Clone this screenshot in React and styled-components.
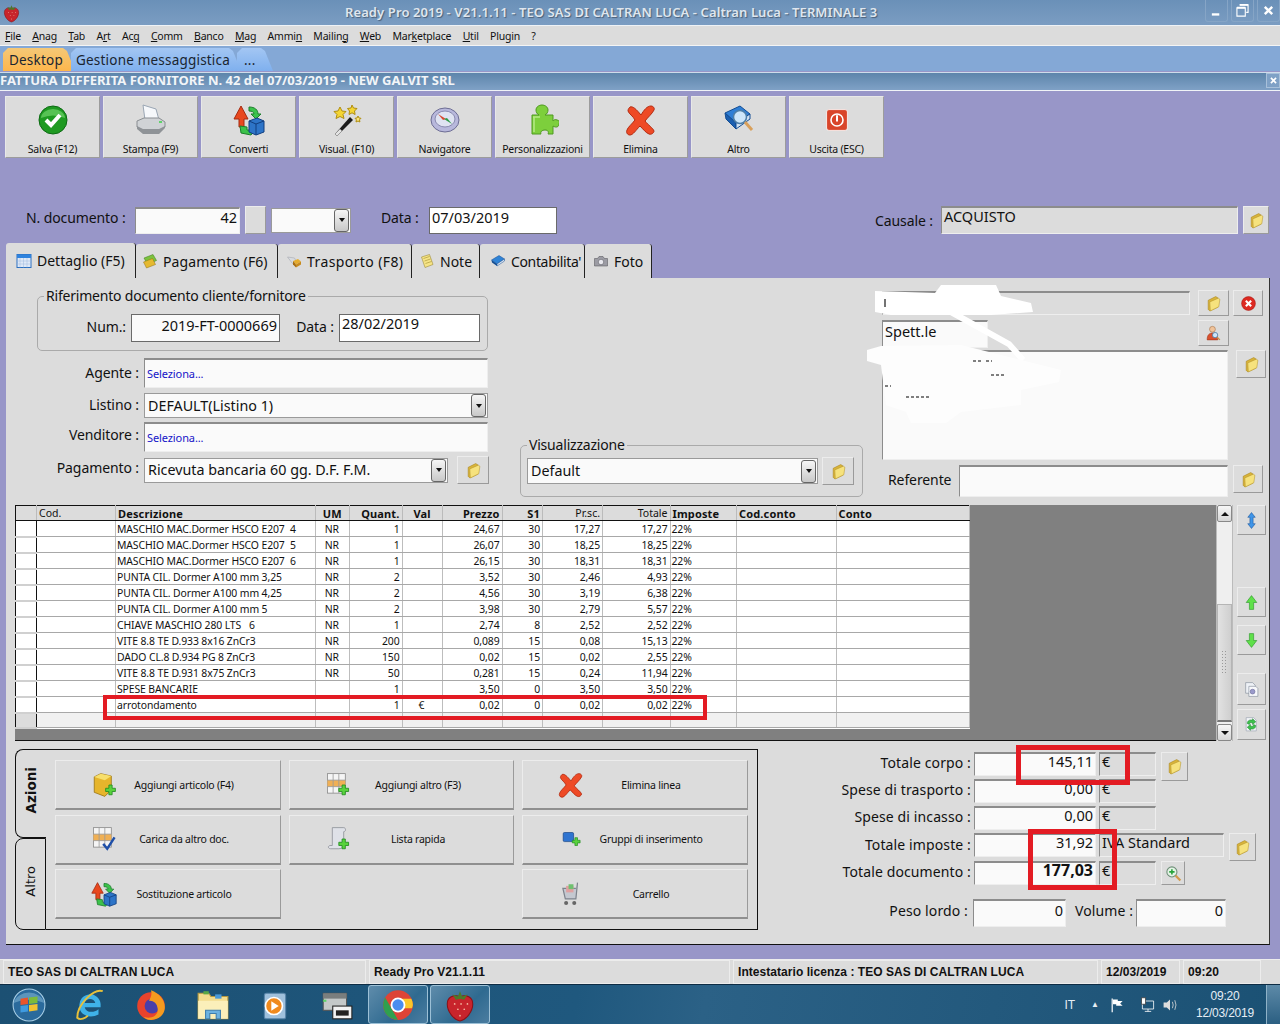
import React from "react";
import styled, { createGlobalStyle } from "styled-components";

const GlobalStyle = createGlobalStyle`
  html, body { margin: 0; padding: 0; background: #9896c8; }
  * { box-sizing: border-box; }
  body { font-family: "Noto Sans", "Open Sans", sans-serif; color: #111; }
`;

const Screen = styled.div`
  width: 1280px;
  height: 1024px;
  overflow: hidden;
  display: flex;
  flex-direction: column;
  background: #9896c8;
`;

/* ---------- window chrome ---------- */
const TitleBar = styled.div`
  height: 26px;
  display: flex;
  align-items: center;
  padding-left: 2px;
  background: linear-gradient(#6a90b8, #7b9dc2);
  border-bottom: 1px solid #eef2f6;
  > svg { width: 19px; height: 20px; flex: none; }
`;
const TitleText = styled.div`
  flex: 1;
  padding: 0 0 2px 324px;
  font-size: 13px;
  font-weight: 600;
  letter-spacing: 0.1px;
  color: #dfe6ee;
  text-shadow: 1px 1px 1px #4a5f78;
  white-space: nowrap;
`;
const WinBtn = styled.div`
  width: 23px;
  height: 22px;
  margin: 0 0 3px 3px;
  border: 1px solid #86a5c6;
  border-top: 0;
  border-radius: 0 0 3px 3px;
  display: flex;
  align-items: center;
  justify-content: center;
  svg { width: 13px; height: 13px; }
`;
const MenuBar = styled.div`
  height: 20px;
  display: flex;
  align-items: center;
  gap: 11.3px;
  padding-left: 5px;
  background: #dcdcdc;
  border-bottom: 1px solid #f4f4f4;
  font-size: 10.5px;
  letter-spacing: -0.2px;
  u { text-decoration-thickness: 1px; text-underline-offset: 1px; }
`;
const TabStrip = styled.div`
  height: 25px;
  display: flex;
  align-items: flex-end;
  padding-left: 3px;
  background: #84a8d6;
`;
const AppTab = styled.div`
  height: 23px;
  width: ${(p) => p.$w}px;
  margin-right: ${(p) => p.$mr || 0}px;
  padding-left: ${(p) => p.$pl || 5}px;
  display: flex;
  align-items: center;
  font-size: 13.5px;
  letter-spacing: 0.2px;
  color: #1a2530;
  background: ${(p) => (p.$active ? "linear-gradient(#f4c877, #fdb64c)" : "linear-gradient(#a3c6f3, #7fb0ee)")};
  clip-path: polygon(0 100%, 0 5px, 5px 0, calc(100% - 12px) 0, calc(100% - 8px) 3px, 100% 100%);
`;
const DocTitle = styled.div`
  height: 19px;
  margin-top: 1px;
  padding-bottom: 3px;
  display: flex;
  align-items: center;
  justify-content: space-between;
  background: linear-gradient(#5d85ab, #7fa1c6);
  border-top: 1px solid #cfdcea;
  border-bottom: 1px solid #f0f3f7;
  color: #f2f5f8;
  font-size: 13px;
  font-weight: 700;
  white-space: nowrap;
`;
const DocClose = styled.span`
  width: 14px;
  height: 15px;
  background: #7fa1c6;
  border: 1px solid #a8c0da;
  display: flex;
  align-items: center;
  justify-content: center;
  svg { width: 9px; height: 9px; }
`;

const Body = styled.div`
  flex: 1;
  padding-top: 5px;
  display: flex;
  flex-direction: column;
`;
const Toolbar = styled.div`
  height: 62px;
  display: flex;
  gap: 3px;
  padding-left: 5px;
`;
const ToolBtn = styled.div`
  width: 95px;
  height: 62px;
  background: #dcdcdc;
  border: 1px solid;
  border-color: #e8e8e8 #9c9c9c #9c9c9c #e8e8e8;
  display: flex;
  flex-direction: column;
  align-items: center;
  padding-top: 7px;
  font-size: 10.5px;
  letter-spacing: -0.25px;
  white-space: nowrap;
  span { margin-top: 6px; }
  svg { height: 32px; }
`;

/* ---------- form parts ---------- */
const Label = styled.span`
  font-size: 14px;
  white-space: nowrap;
  letter-spacing: ${(p) => (p.$wide ? 0.12 : -0.1)}px;
  flex: none;
  width: ${(p) => (p.$w ? `${p.$w}px` : "auto")};
  text-align: ${(p) => p.$align || "left"};
  margin-left: ${(p) => p.$ml || 0}px;
  margin-bottom: ${(p) => p.$mb || 0}px;
  padding-top: ${(p) => p.$pt || 0}px;
`;
const Field = styled.div`
  width: ${(p) => p.$w}px;
  height: ${(p) => p.$h || 26}px;
  margin-left: ${(p) => p.$ml || 0}px;
  margin-top: ${(p) => p.$mt || 0}px;
  flex: none;
  padding: 0 2px 6px 2px;
  display: flex;
  align-items: ${(p) => (p.$top ? "flex-start" : "center")};
  justify-content: ${(p) => (p.$right ? "flex-end" : "flex-start")};
  background: ${(p) => (p.$gray ? "#dcdcdc" : p.$bright ? "#fff" : "#fafafa")};
  border: 1px solid #a4a4a4;
  border-color: #8c8c8c #eee #eee #8c8c8c;
  border-width: 2px 1px 1px 1px;
  font-size: ${(p) => (p.$bold ? 16 : 14.5)}px;
  line-height: 17px;
  white-space: nowrap;
  font-weight: ${(p) => (p.$bold ? 700 : 400)};
`;
const DarkField = styled(Field)`
  border: 1px solid #6a6a6a;
`;
const Pick = styled.span`
  font-size: 11px;
  color: #1414c8;
  letter-spacing: -0.1px;
  margin-top: 6px;
`;
const SelectBox = styled.div`
  width: ${(p) => p.$w}px;
  height: ${(p) => p.$h || 25}px;
  margin-left: ${(p) => p.$ml || 0}px;
  flex: none;
  padding: 0 3px;
  display: flex;
  align-items: center;
  justify-content: space-between;
  background: #fafafa;
  border: 1px solid #9a9a9a;
  font-size: 14.3px;
  line-height: 18px;
  white-space: nowrap;
`;
const DropArrow = styled.div`
  width: 15px;
  height: 23px;
  margin-right: -2px;
  flex: none;
  border: 1px solid #666;
  border-radius: 3px;
  background: linear-gradient(#f6f6f6, #c8c8c8);
  display: flex;
  align-items: center;
  justify-content: center;
  &::after {
    content: "";
    border: 3.5px solid transparent;
    border-top: 4px solid #111;
    border-bottom: 0;
  }
`;
const IconBtn = styled.div`
  width: ${(p) => p.$w || 30}px;
  height: ${(p) => p.$h || 28}px;
  margin-left: ${(p) => p.$ml || 0}px;
  margin-top: ${(p) => p.$mt || 0}px;
  flex: none;
  display: flex;
  align-items: center;
  justify-content: center;
  background: #dcdcdc;
  border: 1px solid;
  border-color: #ececec #9a9a9a #9a9a9a #ececec;
  svg { width: 17px; height: 17px; }
`;
const DocRow = styled.div`
  height: 28px;
  margin-top: 48px;
  display: flex;
  align-items: center;
  padding-left: 26px;
`;

/* ---------- tabbed panel ---------- */
const PageTabs = styled.div`
  height: 35px;
  margin: 9px 0 0 6px;
  display: flex;
  align-items: stretch;
`;
const PageTab = styled.div`
  width: ${(p) => p.$w}px;
  margin-top: ${(p) => (p.$active ? 0 : 1)}px;
  background: #dcdcdc;
  border-right: 1px solid #222;
  border-radius: 3px 3px 0 0;
  display: flex;
  align-items: center;
  padding-left: ${(p) => p.$pl || 7}px;
  gap: 5px;
  font-size: 14px;
  letter-spacing: ${(p) => p.$ls || 0}px;
  white-space: nowrap;
  svg { width: 16px; height: 16px; flex: none; }
`;
const Panel = styled.div`
  width: 1264px;
  height: 667px;
  margin-left: 6px;
  background: #dcdcdc;
  border-bottom: 1px solid #111;
  border-right: 1px solid #333;
`;
const TopSection = styled.div`
  height: 227px;
  display: flex;
  padding-left: 31px;
`;
const LeftCol = styled.div`
  width: 451px;
  padding-top: 9px;
  display: flex;
  flex-direction: column;
`;
const Group = styled.fieldset`
  margin: 0;
  padding: 9px 0 8px 0;
  border: 1px solid #aaa;
  border-radius: 5px;
  min-width: 0;
  display: flex;
  align-items: center;
  legend {
    margin-left: 6px;
    padding: 0 2px;
    font-size: 14px;
    line-height: 18px;
    letter-spacing: -0.2px;
  }
`;
const GroupInner = styled.div`
  display: flex;
  align-items: center;
  margin-left: ${(p) => p.$ml || 0}px;
`;
const FormRow = styled.div`
  margin-top: ${(p) => p.$mt}px;
  display: flex;
  align-items: center;
  gap: 5px;
`;
const ViewGroup = styled(Group)`
  width: 343px;
  height: 61px;
  margin: auto 0 8px 32px;
  padding: 3px 0 0 0;
  align-items: flex-start;
`;
const RightCol = styled.div`
  position: relative;
  width: 385px;
  margin-left: 19px;
  padding-top: 12px;
  display: flex;
  flex-direction: column;
`;
const RightRow = styled.div`
  display: flex;
  align-items: flex-start;
  margin-top: ${(p) => p.$mt || 0}px;
`;
const Scribble = styled.svg`
  position: absolute;
  left: -21px;
  top: 2px;
  pointer-events: none;
`;

/* ---------- grid ---------- */
const GridRow = styled.div`
  display: flex;
  margin-left: 9px;
  height: 236px;
`;
const TableArea = styled.div`
  position: relative;
  width: 1201px;
  background: #808080;
  border-bottom: 1px solid #111;
`;
const Table = styled.table`
  width: 954px;
  border-collapse: collapse;
  table-layout: fixed;
  background: #fff;
  border: 1px solid #111;
  font-size: 10.4px;
  letter-spacing: -0.1px;
`;
const Th = styled.th`
  height: 15px;
  padding: 0 2px;
  background: #dcdcdc;
  border-right: 1px solid #bbb;
  border-bottom: 1px solid #111;
  font-size: ${(p) => (p.$plain ? 10.5 : 11)}px;
  font-weight: ${(p) => (p.$plain ? 400 : 700)};
  letter-spacing: ${(p) => (p.$plain ? 0 : 0.15)}px;
  text-align: ${(p) => p.$align || "left"};
  white-space: nowrap;
  line-height: 13px;
`;
const Td = styled.td`
  height: ${(p) => (p.$shade ? 15 : 16)}px;
  padding: 1px 2px 0 1px;
  border-right: 1px solid #bdbdbd;
  border-bottom: 1px solid #a8a8a8;
  text-align: ${(p) => p.$align || "left"};
  white-space: pre;
  overflow: hidden;
  line-height: 13px;
  background: ${(p) => (p.$shade ? "#f1f1f1" : "#fff")};
`;
const RowMark = styled(Td)`
  border-right: 1px solid #111;
  background: ${(p) => (p.$shade ? "#dcdcdc" : "#fff")};
  border-bottom: 2px solid #d0d0d0;
`;
const RedBox = styled.div`
  position: absolute;
  left: ${(p) => p.$x}px;
  top: ${(p) => p.$y}px;
  width: ${(p) => p.$w}px;
  height: ${(p) => p.$h}px;
  border: ${(p) => p.$b || 4}px solid #e31b23;
  pointer-events: none;
`;
const Scroll = styled.div`
  width: 17px;
  display: flex;
  flex-direction: column;
  background: #efefef;
  border: 1px solid #bbb;
  border-width: 0 1px;
`;
const ScrollArrow = styled.div`
  height: 17px;
  display: flex;
  align-items: center;
  justify-content: center;
  background: linear-gradient(#f7f7f7, #d6d6d6);
  border: 1px solid #888;
  border-radius: 2px;
  &::after {
    content: "";
    border: 4px solid transparent;
    ${(p) => (p.$down ? "border-top: 4px solid #111; border-bottom: 0;" : "border-bottom: 4px solid #111; border-top: 0;")}
  }
`;
const ScrollTrack = styled.div`
  flex: 1;
  display: flex;
  flex-direction: column;
  padding-top: 82px;
`;
const ScrollThumb = styled.div`
  height: 118px;
  background: linear-gradient(90deg, #e2e2e2, #cfcfcf);
  border: 1px solid #b5b5b5;
  border-bottom: 2px solid #777;
  display: flex;
  align-items: flex-end;
  justify-content: center;
  padding-bottom: 46px;
  &::after {
    content: "";
    width: 7px;
    height: 24px;
    background-image: radial-gradient(#999 35%, transparent 40%);
    background-size: 3px 3px;
  }
`;
const SideBtns = styled.div`
  width: 29px;
  margin-left: 4px;
  display: flex;
  flex-direction: column;
`;

/* ---------- actions + totals ---------- */
const BottomRow = styled.div`
  display: flex;
  margin: 8px 0 0 9px;
`;
const ActionWrap = styled.div`
  width: 743px;
  height: 181px;
  display: flex;
`;
const SideTabs = styled.div`
  width: 31px;
  flex: none;
  display: flex;
  flex-direction: column;
`;
const SideTab = styled.div`
  height: ${(p) => p.$h}px;
  display: flex;
  align-items: center;
  justify-content: center;
  background: #dcdcdc;
  border: 1px solid #111;
  border-right: ${(p) => (p.$active ? "0" : "1px solid #111")};
  border-radius: 8px 0 0 8px;
  span {
    writing-mode: vertical-rl;
    transform: rotate(180deg);
    font-family: "DejaVu Sans", sans-serif;
    font-size: ${(p) => (p.$active ? 13.5 : 13)}px;
    font-weight: ${(p) => (p.$active ? 700 : 400)};
    margin-top: -6px;
  }
`;
const ActionGrid = styled.div`
  flex: 1;
  border: 1px solid #111;
  border-left: 0;
  padding: 10px 0 0 9px;
  display: grid;
  grid-template-columns: 226px 225px 226px;
  grid-template-rows: 50px 50px 50px;
  column-gap: 8px;
  row-gap: 4.5px;
`;
const ActionBtn = styled.div`
  grid-column: ${(p) => p.$col};
  display: flex;
  align-items: center;
  background: #dcdcdc;
  border: 1px solid;
  border-color: #ececec #9a9a9a #8f8f8f #ececec;
  border-bottom-width: 2px;
  font-size: 10.5px;
  letter-spacing: -0.25px;
`;
const ActionIcon = styled.div`
  width: 96px;
  flex: none;
  display: flex;
  justify-content: center;
  svg { width: 26px; height: 28px; }
`;
const ActionLabel = styled.div`
  width: 64px;
  display: flex;
  justify-content: center;
  white-space: nowrap;
`;
const Totals = styled.div`
  position: relative;
  margin-left: 17px;
  padding-top: 3px;
  width: 490px;
  display: flex;
  flex-direction: column;
`;
const TotalRow = styled.div`
  display: flex;
  align-items: flex-start;
  margin-top: ${(p) => p.$mt || 0}px;
`;

/* ---------- status + taskbar ---------- */
const StatusBar = styled.div`
  height: 25px;
  margin-top: auto;
  display: flex;
  gap: 3px;
  padding-left: 3px;
  background: #dcdcdc;
  border-top: 1px solid #ececec;
`;
const StatusCell = styled.div`
  width: ${(p) => p.$w}px;
  flex: none;
  display: flex;
  align-items: center;
  padding-left: 4px;
  border: 1px solid #ececec;
  font-family: "Liberation Sans", sans-serif;
  font-size: 12px;
  font-weight: 700;
  letter-spacing: 0.05px;
  white-space: nowrap;
`;
const Taskbar = styled.div`
  height: 40px;
  flex: none;
  display: flex;
  align-items: center;
  background: linear-gradient(100deg, #1c5073, #1f587e 45%, #2b6186 55%, #1b5174);
  border-top: 1px solid #0e2c44;
  color: #e6eef5;
`;
const TaskSlot = styled.div`
  width: ${(p) => p.$w}px;
  margin-left: ${(p) => p.$ml || 0}px;
  flex: none;
  height: 39px;
  display: flex;
  align-items: center;
  justify-content: center;
  ${(p) =>
    p.$active &&
    `background: linear-gradient(135deg, #5f8cab, #2f6a90 60%, #4b7da0);
     border: 1px solid #9cc0d6; border-radius: 3px;`}
  svg { width: 34px; height: 34px; }
`;
const Tray = styled.div`
  margin-left: auto;
  display: flex;
  align-items: center;
  height: 100%;
  font-family: "Liberation Sans", sans-serif;
  font-size: 12px;
`;
const TrayText = styled.span`
  font-size: ${(p) => p.$size || 12}px;
  margin-right: ${(p) => p.$mr}px;
`;
const TrayIcon = styled.span`
  display: flex;
  margin-right: ${(p) => p.$mr}px;
  svg { width: 16px; height: 16px; }
`;
const Clock = styled.div`
  width: 78px;
  text-align: center;
  line-height: 17px;
  font-size: 12px;
  letter-spacing: -0.2px;
`;
const ShowDesktop = styled.div`
  width: 14px;
  height: 100%;
  margin-left: 2px;
  background: linear-gradient(#5d8aa8, #2b5f82);
  border-left: 1px solid #8fb2c8;
`;

/* ---------- icons ---------- */
const Svg = ({ children, vb = "0 0 32 32" }) => (
  <svg viewBox={vb} xmlns="http://www.w3.org/2000/svg">
    {children}
  </svg>
);
const MinGlyph = () => (
  <Svg vb="0 0 14 14"><rect x="2" y="10" width="8" height="2.500" fill="#fff" /></Svg>
);
const RestoreGlyph = () => (
  <Svg vb="0 0 14 14">
    <path d="M4 1h9v8h-2M1 4h9v9H1z" fill="none" stroke="#fff" strokeWidth="1.200" />
    <path d="M1 4h9M4 1h9" stroke="#fff" strokeWidth="2" />
  </Svg>
);
const CloseGlyph = () => (
  <Svg vb="0 0 14 14"><path d="M3 3l8 8M11 3l-8 8" stroke="#fff" strokeWidth="2.600" /></Svg>
);
const CheckIcon = () => (
  <Svg>
    <circle cx="16" cy="16" r="14" fill="#1f9a22" stroke="#0d6b14" />
    <path d="M4 14a12 9 0 0 1 24 0q-12-5-24 0z" fill="#6fd36a" opacity=".7" />
    <path d="M9 16l5 5 9-10" fill="none" stroke="#fff" strokeWidth="4" />
  </Svg>
);
const PrinterIcon = () => (
  <Svg>
    <path d="M8 1l13 4 3 11H10z" fill="#f6f8fb" stroke="#9aa6b4" />
    <path d="M2 17l7-3h15l6 4v5l-6 4H8l-6-4z" fill="#d0d3d6" stroke="#8a8e92" />
    <path d="M2 22l6 3h16l6-3v2l-6 6H8l-6-5z" fill="#8f9397" />
    <rect x="24" y="17" width="3" height="2" fill="#5fd36a" />
  </Svg>
);
const ConvertIcon = () => (
  <Svg>
    <path d="M8 2l7 13h-4v8H6v-8H1z" fill="#e8481e" stroke="#a52a10" />
    <path d="M16 3c6 0 9 3 9 7h3l-5 5-5-5h3c0-2-2-3-5-3z" fill="#3cc24b" stroke="#1c7f2b" />
    <path d="M7 22l7 1v3h8l-4 5-10-2z" fill="#3cc24b" stroke="#1c7f2b" />
    <path d="M16 17l8-3 7 3v11l-8 3-7-3z" fill="#2d74c8" stroke="#123f80" />
    <path d="M16 17l7 3 8-3M23 20v11" fill="none" stroke="#123f80" />
  </Svg>
);
const WandIcon = () => (
  <Svg>
    <path d="M4 30l2 2L22 16l-3-3z" fill="#1c1c1c" />
    <path d="M4 30l2 2 5-5-2-2z" fill="#e3e3e3" stroke="#888" strokeWidth=".5" />
    <path d="M9 3l2 4 4 .5-3 3 1 4-4-2-4 2 1-4-3-3 4-.5z" fill="#f4d534" stroke="#b08e10" />
    <path d="M21 1l1.500 3 3.500.5-2.500 2.500.6 3.500-3.100-1.700-3 1.700.5-3.500L16.500 4.500 20 4z" fill="#f4d534" stroke="#b08e10" />
    <path d="M27 12l1 2 2 .3-1.500 1.500.4 2.200-1.900-1-2 1 .4-2.200L24 14.300l2-.3z" fill="#f7e27a" stroke="#b08e10" />
  </Svg>
);
const CompassIcon = () => (
  <Svg>
    <ellipse cx="16" cy="16" rx="14" ry="12" fill="#b8b8dc" stroke="#6d6d94" />
    <ellipse cx="16" cy="15" rx="10" ry="8" fill="#dfe3f2" stroke="#8a8ab0" />
    <path d="M9 10l8 5-3 1z" fill="#d84a30" />
    <path d="M23 20l-8-5 3-1z" fill="#2f9a4a" />
  </Svg>
);
const PuzzleIcon = () => (
  <Svg>
    <path d="M5 11h7c-2-1-3-3-3-5 0-3 3-5 6-5s6 2 6 5c0 2-1 4-3 5h8v6c1-1 2-2 4-1 2 0 3 2 2 4 0 3-3 4-6 2v8H21c1-2 0-4-3-4s-5 2-4 4H5z" fill="#7dcf3c" stroke="#4f9a20" />
    <path d="M6 13h7M7 13v15" stroke="#b6ea86" strokeWidth="1.500" fill="none" />
  </Svg>
);
const CrossIcon = () => (
  <Svg>
    <path d="M5 3c3-1 6 2 11 8 3-5 6-9 10-9 2 0 4 2 3 4-2 4-6 7-9 11 3 4 8 7 9 10 0 2-3 4-5 3-3-1-6-5-9-8-4 4-7 9-10 9-3 0-4-3-3-5 1-3 5-6 8-10C8 12 4 10 3 7c0-2 1-3 2-4z" fill="#ee4a26" stroke="#b22a10" />
  </Svg>
);
const BookIcon = () => (
  <Svg>
    <path d="M2 9L17 2l10 8-14 9z" fill="#2f7fd6" stroke="#134d93" />
    <path d="M2 9l11 10v6L3 15z" fill="#1b5fb0" stroke="#134d93" />
    <path d="M13 19l14-9v5L13 25z" fill="#cfe0f2" stroke="#134d93" />
    <circle cx="17" cy="13" r="6.500" fill="#cde6fa" stroke="#4e7fa8" strokeWidth="1.500" />
    <path d="M22 18l7 8" stroke="#d9a05b" strokeWidth="3" />
  </Svg>
);
const PowerIcon = () => (
  <Svg vb="-4 -4 40 40">
    <rect x="3" y="3" width="26" height="26" rx="3" fill="#d9452a" stroke="#fff" />
    <circle cx="16" cy="16" r="7.500" fill="none" stroke="#fff" strokeWidth="2" />
    <path d="M16 10v8" stroke="#fff" strokeWidth="2.500" />
  </Svg>
);
const FolderIcon = () => (
  <Svg>
    <path d="M6 10l14-7 4 2v18L9 30l-3-3z" fill="#d9b43a" stroke="#a58320" />
    <path d="M9 13l16-7 3 2-2 14-16 8z" fill="#f6e27d" stroke="#b4932b" />
  </Svg>
);
const RedCloseIcon = () => (
  <Svg>
    <circle cx="16" cy="16" r="13" fill="#dd2a22" stroke="#a31510" />
    <path d="M11 11l10 10M21 11L11 21" stroke="#fff" strokeWidth="4" />
  </Svg>
);
const PersonIcon = () => (
  <Svg>
    <circle cx="14" cy="8" r="5.500" fill="#f0c39a" stroke="#9a6a40" />
    <path d="M4 28c0-9 4-13 10-13s10 4 10 13z" fill="#d9502e" stroke="#9a2f14" />
    <circle cx="19" cy="19" r="5" fill="#cde6fa" stroke="#4a7aa2" strokeWidth="1.500" />
    <path d="M23 23l5 5" stroke="#c8904a" strokeWidth="2.500" />
  </Svg>
);
const UpDownIcon = () => (
  <Svg>
    <path d="M16 1l7 9h-4v12h4l-7 9-7-9h4V10H9z" fill="#3f95e8" stroke="#174f95" />
  </Svg>
);
const ArrowIcon = ({ down }) => (
  <Svg>
    <path
      d={down ? "M12 3h8v13h6L16 29 6 16h6z" : "M12 29h8V16h6L16 3 6 16h6z"}
      fill="#5fe04a"
      stroke="#1f8a1e"
    />
  </Svg>
);
const CopyGearIcon = () => (
  <Svg>
    <path d="M5 3h13l5 5v15H5z" fill="#eef1f6" stroke="#6f7888" />
    <path d="M11 10h13l4 4v15H11z" fill="#f7f8fb" stroke="#6f7888" />
    <circle cx="18" cy="20" r="4.500" fill="#9a9acb" stroke="#5a5a8a" />
  </Svg>
);
const RefreshIcon = () => (
  <Svg>
    <path d="M6 3h14l5 5v20H6z" fill="#f2f4f8" stroke="#8a93a3" />
    <path d="M8 14c0-5 5-8 10-6V5l6 6-6 5v-3c-4-1-6 0-6 3z" fill="#3cc24b" stroke="#1c7f2b" />
    <path d="M24 18c0 5-5 8-10 6v3l-6-6 6-5v3c4 1 6 0 6-3z" fill="#3cc24b" stroke="#1c7f2b" />
  </Svg>
);
const ZoomPlusIcon = () => (
  <Svg>
    <circle cx="13" cy="13" r="9.500" fill="#e4f3e6" stroke="#6f8e78" strokeWidth="2" />
    <path d="M13 8v10M8 13h10" stroke="#26a33a" strokeWidth="3" />
    <path d="M20 20l9 9" stroke="#d49a4c" strokeWidth="4" />
  </Svg>
);
const CalIcon = () => (
  <Svg>
    <rect x="2" y="3" width="28" height="26" fill="#dfe9f7" stroke="#2b6fc0" strokeWidth="2" />
    <rect x="2" y="3" width="28" height="7" fill="#2f83de" />
    <path d="M8 10v19M15 10v19M22 10v19M2 16h28M2 22h28" stroke="#9fb9dc" />
  </Svg>
);
const MoneyIcon = () => (
  <Svg>
    <path d="M4 10l18-7 7 12-18 8z" fill="#7cc23f" stroke="#3c7a17" />
    <path d="M3 18l18-7 6 12-18 7z" fill="#e5b930" stroke="#8e6f10" />
  </Svg>
);
const TruckIcon = () => (
  <Svg>
    <path d="M3 8l14 2 4 8-8 3z" fill="#d8dbe0" stroke="#9a9ea6" />
    <path d="M14 16l10-4 6 5-10 6z" fill="#e6ad2e" />
    <path d="M14 16l6 7v6l-6-6z" fill="#a86e14" />
    <path d="M20 23l10-6v6l-10 6z" fill="#c78a1e" />
  </Svg>
);
const NoteIcon = () => (
  <Svg>
    <path d="M5 8l16-5 7 20-16 6z" fill="#f6e486" stroke="#8e7a22" />
    <path d="M9 11l12-4M11 16l12-4M13 21l12-4" stroke="#8e7a22" />
  </Svg>
);
const LedgerIcon = () => (
  <Svg>
    <path d="M3 14L18 5l11 7-15 10z" fill="#2f83d6" stroke="#134d93" />
    <path d="M3 14l11 8v4L4 19z" fill="#134d93" />
    <path d="M14 22l15-10v4L14 26z" fill="#dfe8f4" stroke="#134d93" />
  </Svg>
);
const CameraIcon = () => (
  <Svg>
    <path d="M3 11h6l3-4h8l3 4h6v15H3z" fill="#9c9ca4" stroke="#4c4c52" />
    <circle cx="16" cy="18" r="5.500" fill="#e8e8ee" stroke="#4c4c52" />
  </Svg>
);
const BoxPlusIcon = () => (
  <Svg>
    <path d="M4 6l8-4 13 3v17l-8 8-13-5z" fill="#e6b52c" stroke="#9a7512" />
    <path d="M4 6l13 4 8-5-13-3z" fill="#f7df6c" />
    <path d="M18 20h4v-4h4v4h4v4h-4v4h-4v-4h-4z" fill="#59d23d" stroke="#1f8a1e" />
  </Svg>
);
const GridPlusIcon = ({ check }) => (
  <Svg>
    <rect x="3" y="2" width="22" height="24" fill="#f5f5f5" stroke="#8a8a8a" />
    <rect x="3" y="10" width="22" height="8" fill="#f0b055" />
    <path d="M10 2v24M17 2v24M3 10h22M3 18h22" stroke="#9a9a9a" />
    {check ? (
      <path d="M15 22l5 6 9-14" fill="none" stroke="#1f4fa8" strokeWidth="3" />
    ) : (
      <path d="M17 20h4v-4h4v4h4v4h-4v4h-4v-4h-4z" fill="#59d23d" stroke="#1f8a1e" />
    )}
  </Svg>
);
const CheckGridIcon = () => <GridPlusIcon check />;
const ScrollPlusIcon = () => (
  <Svg>
    <path d="M9 2h14c3 0 3 5 0 5v15c0 4-2 6-6 6H7c-3 0-4-3-1-4h3z" fill="#dfe1e8" stroke="#8c9098" />
    <path d="M17 20h4v-4h4v4h4v4h-4v4h-4v-4h-4z" fill="#59d23d" stroke="#1f8a1e" />
  </Svg>
);
const GroupPlusIcon = () => (
  <Svg vb="-4 -4 40 40">
    <rect x="4" y="6" width="16" height="14" rx="2" fill="#2f74d0" stroke="#123f80" />
    <path d="M18 18h4v-4h4v4h4v4h-4v4h-4v-4h-4z" fill="#59d23d" stroke="#1f8a1e" />
  </Svg>
);
const CartIcon = () => (
  <Svg>
    <path d="M24 2l-2 20H9L6 9h16" fill="#c4c8d0" stroke="#7d838c" strokeWidth="1.500" />
    <rect x="10" y="6" width="9" height="8" fill="#e0a0a0" />
    <rect x="13" y="4" width="6" height="6" fill="#6fc06f" />
    <circle cx="10" cy="27" r="2.500" fill="#666" />
    <circle cx="20" cy="27" r="2.500" fill="#666" />
  </Svg>
);
const Strawberry = () => (
  <Svg>
    <path d="M16 8c7-2 12 1 12 7 0 7-6 15-12 16C10 30 4 22 4 15c0-6 5-9 12-7z" fill="#c8242c" stroke="#8a1218" />
    <path d="M9 6l5 2 2-5 2 5 5-2-3 5-4-1-4 1z" fill="#4c7a2a" />
    <g fill="#f3b8a0">
      <circle cx="11" cy="15" r=".8" /><circle cx="17" cy="15" r=".8" /><circle cx="23" cy="15" r=".8" />
      <circle cx="14" cy="20" r=".8" /><circle cx="20" cy="20" r=".8" /><circle cx="16" cy="26" r=".8" />
    </g>
  </Svg>
);
const WinOrb = () => (
  <Svg>
    <circle cx="16" cy="16" r="15" fill="#2a6a9c" stroke="#a9cfe6" />
    <path d="M1.500 14a15 13 0 0 1 29 0q-14.500-6-29 0z" fill="#7fb2d2" opacity=".6" />
    <path d="M8 10l7-1v6l-7 1z" fill="#e8552c" />
    <path d="M16 9l8-1v6l-8 1z" fill="#7dbb3a" />
    <path d="M8 17l7-1v6l-7 1z" fill="#3f9be0" />
    <path d="M16 16l8-1v6l-8 1z" fill="#f2c230" />
  </Svg>
);
const IeIcon = () => (
  <Svg>
    <path d="M6 17a10 10 0 0 1 20-2v3H11c1 5 8 6 13 2v5c-8 4-18 1-18-8zM11 14h10c-1-5-9-5-10 0z" fill="#3fb2e8" />
    <path d="M28 3c-8-3-24 12-24 25 3 3 8 0 10-2" fill="none" stroke="#e8c13a" strokeWidth="1.800" />
  </Svg>
);
const FoxIcon = () => (
  <Svg>
    <circle cx="16" cy="17" r="13" fill="#e8432c" />
    <circle cx="17" cy="17" r="7" fill="#4a3ea8" />
    <path d="M16 2c8 3 13 9 13 16 0 7-6 12-13 12-3 0-5-1-7-3 8 3 15-2 13-9-1-5-5-6-8-6 2-3 3-6 2-10z" fill="#f59a1f" />
  </Svg>
);
const ExplorerIcon = () => (
  <Svg>
    <path d="M2 5h10l2 3h16v21H2z" fill="#f3dd8e" stroke="#b89a40" />
    <path d="M2 12h28v17H2z" fill="#fbefba" />
    <rect x="7" y="3" width="5" height="3" fill="#5aa845" />
    <rect x="18" y="6" width="6" height="4" fill="#4a9ad8" />
    <path d="M9 29v-8h14v8h-4v-5h-6v5z" fill="#6db2e0" stroke="#3f7fae" />
  </Svg>
);
const MediaIcon = () => (
  <Svg>
    <rect x="6" y="5" width="20" height="24" rx="2" fill="#9fc0dc" stroke="#5a86aa" />
    <circle cx="15" cy="17" r="8" fill="#f08a1e" stroke="#fff" strokeWidth="1.500" />
    <path d="M12.500 12.500l7 4.500-7 4.500z" fill="#fff" />
  </Svg>
);
const PrintTaskIcon = () => (
  <Svg>
    <rect x="3" y="5" width="22" height="16" fill="#c4c8c8" stroke="#555" />
    <rect x="3" y="5" width="22" height="5" fill="#7a7e7e" />
    <rect x="3" y="11" width="3" height="2" fill="#5fd36a" />
    <rect x="12" y="17" width="18" height="12" fill="#f2f2f2" stroke="#222" />
    <rect x="15" y="21" width="12" height="5" fill="#222" />
  </Svg>
);
const ChromeIcon = () => (
  <Svg>
    <circle cx="16" cy="16" r="14" fill="#dd4436" />
    <path d="M16 30A14 14 0 0 1 3.900 9L10 19.500l6 10.500z" fill="#2fa04f" />
    <path d="M16 30l6-11h7.200A14 14 0 0 0 30 16c0-2-.5-4.200-1.500-6H16l6 9z" fill="#fbc72b" />
    <circle cx="16" cy="16" r="7" fill="#fff" />
    <circle cx="16" cy="16" r="5.300" fill="#4a8df0" />
  </Svg>
);
const FlagIcon = () => (
  <Svg vb="0 0 20 20">
    <path d="M4 2v17" stroke="#fff" strokeWidth="1.500" />
    <path d="M5 3h6v2h6l-3 3 3 3H9V9H5z" fill="#fff" />
  </Svg>
);
const NetIcon = () => (
  <Svg vb="0 0 20 20">
    <path d="M3 5h14v10H3z" fill="none" stroke="#fff" />
    <rect x="2" y="1" width="5" height="8" fill="#fff" stroke="#444" />
    <path d="M10 15v3M6 18h8" stroke="#fff" />
  </Svg>
);
const SpeakerIcon = () => (
  <Svg vb="0 0 20 20">
    <path d="M2 7h4l4-4v14l-4-4H2z" fill="#ddd" />
    <path d="M13 6q2 4 0 8M16 4q3 6 0 12" fill="none" stroke="#ddd" />
  </Svg>
);

/* ---------- data ---------- */
const MENU = [
  [null, "F", "ile"], [null, "A", "nag"], [null, "T", "ab"], ["A", "r", "t"], ["Ac", "q", ""], [null, "C", "omm"],
  [null, "B", "anco"], [null, "M", "ag"], ["Ammi", "n", ""], ["Mailin", "g", ""], [null, "W", "eb"],
  ["Mar", "k", "etplace"], [null, "U", "til"], ["Plugin", "", ""], ["?", "", ""],
];
const TOOLS = [
  ["Salva (F12)", CheckIcon], ["Stampa (F9)", PrinterIcon], ["Converti", ConvertIcon],
  ["Visual. (F10)", WandIcon], ["Navigatore", CompassIcon], ["Personalizzazioni", PuzzleIcon],
  ["Elimina", CrossIcon], ["Altro", BookIcon], ["Uscita (ESC)", PowerIcon],
];
const PAGE_TABS = [
  { label: "Dettaglio (F5)", Icon: CalIcon, w: 130, pl: 10, active: true },
  { label: "Pagamento (F6)", Icon: MoneyIcon, w: 142, pl: 6, ls: 0.1 },
  { label: "Trasporto (F8)", Icon: TruckIcon, w: 134, pl: 8, ls: 0.4 },
  { label: "Note", Icon: NoteIcon, w: 68, pl: 7 },
  { label: "Contabilita'", Icon: LedgerIcon, w: 105, pl: 10, ls: -0.35 },
  { label: "Foto", Icon: CameraIcon, w: 67, pl: 8 },
];
const COLS = [21, 79, 200, 33.5, 53, 40, 60, 40.5, 60, 67.5, 66.5, 99.5, 133.5];
const ROWS = [
  ["MASCHIO MAC.Dormer HSCO E207  4", "NR", "1", "", "24,67", "30", "17,27", "17,27"],
  ["MASCHIO MAC.Dormer HSCO E207  5", "NR", "1", "", "26,07", "30", "18,25", "18,25"],
  ["MASCHIO MAC.Dormer HSCO E207  6", "NR", "1", "", "26,15", "30", "18,31", "18,31"],
  ["PUNTA CIL. Dormer A100 mm 3,25", "NR", "2", "", "3,52", "30", "2,46", "4,93"],
  ["PUNTA CIL. Dormer A100 mm 4,25", "NR", "2", "", "4,56", "30", "3,19", "6,38"],
  ["PUNTA CIL. Dormer A100 mm 5", "NR", "2", "", "3,98", "30", "2,79", "5,57"],
  ["CHIAVE MASCHIO 280 LTS   6", "NR", "1", "", "2,74", "8", "2,52", "2,52"],
  ["VITE 8.8 TE D.933 8x16 ZnCr3", "NR", "200", "", "0,089", "15", "0,08", "15,13"],
  ["DADO CL.8 D.934 PG 8 ZnCr3", "NR", "150", "", "0,02", "15", "0,02", "2,55"],
  ["VITE 8.8 TE D.931 8x75 ZnCr3", "NR", "50", "", "0,281", "15", "0,24", "11,94"],
  ["SPESE BANCARIE", "", "1", "", "3,50", "0", "3,50", "3,50"],
  ["arrotondamento", "", "1", "€", "0,02", "0", "0,02", "0,02"],
];
const ACTIONS = [
  ["Aggiungi articolo (F4)", BoxPlusIcon, 1], ["Aggiungi altro (F3)", GridPlusIcon, 2], ["Elimina linea", CrossIcon, 3],
  ["Carica da altro doc.", CheckGridIcon, 1], ["Lista rapida", ScrollPlusIcon, 2], ["Gruppi di inserimento", GroupPlusIcon, 3],
  ["Sostituzione articolo", ConvertIcon, 1], ["Carrello", CartIcon, 3],
];

function GridTable() {
  return (
    <Table>
      <colgroup>
        {COLS.map((w, i) => (
          <col key={i} style={{ width: w }} />
        ))}
      </colgroup>
      <thead>
        <tr>
          <Th />
          <Th $plain>Cod.</Th>
          <Th>Descrizione</Th>
          <Th $align="center">UM</Th>
          <Th $align="right">Quant.</Th>
          <Th $align="center">Val</Th>
          <Th $align="right">Prezzo</Th>
          <Th $align="right">S1</Th>
          <Th $plain $align="right">Pr.sc.</Th>
          <Th $plain $align="right">Totale</Th>
          <Th>Imposte</Th>
          <Th>Cod.conto</Th>
          <Th>Conto</Th>
        </tr>
      </thead>
      <tbody>
        {ROWS.map((r) => (
          <tr key={r[0]}>
            <RowMark />
            <Td />
            <Td>{r[0]}</Td>
            <Td $align="center">{r[1]}</Td>
            <Td $align="right">{r[2]}</Td>
            <Td $align="center">{r[3]}</Td>
            <Td $align="right">{r[4]}</Td>
            <Td $align="right">{r[5]}</Td>
            <Td $align="right">{r[6]}</Td>
            <Td $align="right">{r[7]}</Td>
            <Td>22%</Td>
            <Td />
            <Td />
          </tr>
        ))}
        <tr>
          <RowMark $shade />
          {COLS.slice(1).map((w, i) => (
            <Td key={i} $shade />
          ))}
        </tr>
      </tbody>
    </Table>
  );
}

export default function App() {
  return (
    <Screen>
      <GlobalStyle />
      <TitleBar>
        <Strawberry />
        <TitleText>Ready Pro 2019 - V21.1.11 - TEO SAS DI CALTRAN LUCA - Caltran Luca - TERMINALE 3</TitleText>
        <WinBtn><MinGlyph /></WinBtn>
        <WinBtn><RestoreGlyph /></WinBtn>
        <WinBtn><CloseGlyph /></WinBtn>
      </TitleBar>
      <MenuBar>
        {MENU.map(([before, under, after]) => (
          <span key={`${before}${under}${after}`}>
            {before}
            {under && <u>{under}</u>}
            {after}
          </span>
        ))}
      </MenuBar>
      <TabStrip>
        <AppTab $active $w={72} $mr={-4} $pl={6}>Desktop</AppTab>
        <AppTab $w={170} $mr={-4}>Gestione messaggistica</AppTab>
        <AppTab $w={36} $pl={7}>...</AppTab>
      </TabStrip>
      <DocTitle>
        FATTURA DIFFERITA FORNITORE N. 42 del 07/03/2019 - NEW GALVIT SRL
        <DocClose><CloseGlyph /></DocClose>
      </DocTitle>

      <Body>
        <Toolbar>
          {TOOLS.map(([label, Icon]) => (
            <ToolBtn key={label}>
              <Icon />
              <span>{label}</span>
            </ToolBtn>
          ))}
        </Toolbar>

        <DocRow>
          <Label $w={109} $mb={5}>N. documento :</Label>
          <Field $w={105} $h={27} $right>42</Field>
          <IconBtn $w={21} $h={28} $ml={5} />
          <SelectBox $w={80} $ml={5}><span /><DropArrow /></SelectBox>
          <Label $ml={30} $w={48} $mb={5}>Data :</Label>
          <DarkField $bright $w={128} $h={27}>07/03/2019</DarkField>
          <Label $ml={318} $w={66}>Causale :</Label>
          <Field $gray $top $w={297} $h={28}>ACQUISTO</Field>
          <IconBtn $w={26} $h={28} $ml={5}><FolderIcon /></IconBtn>
        </DocRow>

        <PageTabs>
          {PAGE_TABS.map(({ label, Icon, w, pl, ls, active }) => (
            <PageTab key={label} $w={w} $pl={pl} $ls={ls} $active={active}>
              <Icon />
              {label}
            </PageTab>
          ))}
        </PageTabs>

        <Panel>
          <TopSection>
            <LeftCol>
              <Group>
                <legend>Riferimento documento cliente/fornitore</legend>
                <GroupInner>
                  <Label $w={88} $align="right" $mb={4}>Num.:</Label>
                  <DarkField $w={149} $h={28} $ml={5} $right>2019-FT-0000669</DarkField>
                  <Label $w={54} $align="right" $mb={4}>Data :</Label>
                  <DarkField $bright $w={141} $h={28} $ml={5} $top>28/02/2019</DarkField>
                </GroupInner>
              </Group>
              <FormRow $mt={7}>
                <Label $w={102} $align="right" $mb={2}>Agente :</Label>
                <Field $w={344} $h={30}><Pick>Seleziona...</Pick></Field>
              </FormRow>
              <FormRow $mt={5}>
                <Label $w={102} $align="right" $mb={2}>Listino :</Label>
                <SelectBox $w={344}>DEFAULT(Listino 1)<DropArrow /></SelectBox>
              </FormRow>
              <FormRow $mt={4}>
                <Label $w={102} $align="right" $mb={6}>Venditore :</Label>
                <Field $w={344} $h={30}><Pick>Seleziona...</Pick></Field>
              </FormRow>
              <FormRow $mt={4}>
                <Label $w={102} $align="right" $mb={5}>Pagamento :</Label>
                <SelectBox $w={304}>Ricevuta bancaria 60 gg. D.F. F.M.<DropArrow /></SelectBox>
                <IconBtn $w={32} $ml={4}><FolderIcon /></IconBtn>
              </FormRow>
            </LeftCol>

            <ViewGroup>
              <legend>Visualizzazione</legend>
              <GroupInner $ml={6}>
                <SelectBox $w={291} $h={26}>Default<DropArrow /></SelectBox>
                <IconBtn $w={32} $ml={4}><FolderIcon /></IconBtn>
              </GroupInner>
            </ViewGroup>

            <RightCol>
              <RightRow>
                <Field $gray $w={308} $h={24} $mt={1} />
                <IconBtn $w={31} $h={26} $ml={8}><FolderIcon /></IconBtn>
                <IconBtn $w={30} $h={26} $ml={4}><RedCloseIcon /></IconBtn>
              </RightRow>
              <RightRow $mt={4}>
                <Field $w={106} $h={28}>Spett.le</Field>
                <IconBtn $w={31} $h={26} $ml={210}><PersonIcon /></IconBtn>
              </RightRow>
              <RightRow $mt={2}>
                <Field $w={346} $h={110} />
                <IconBtn $w={30} $ml={8}><FolderIcon /></IconBtn>
              </RightRow>
              <RightRow $mt={5}>
                <Label $w={77} $pt={5} $ml={6}>Referente</Label>
                <Field $w={269} $h={32} $ml={-6} />
                <IconBtn $w={30} $ml={5}><FolderIcon /></IconBtn>
              </RightRow>
              <Scribble width="220" height="170" viewBox="860 280 220 170">
                <path d="M874 291l60 2 6-8 55 0 5 11 30 7 2 9-42 3H890l-16-3z" fill="#fff" />
                <path d="M950 312l58 32 14 16" fill="none" stroke="#fff" strokeWidth="6" />
                <path d="M866 350l14-4 80-1 40 10 60 15-2 12-38 8v15l-60 7-15 11h-35l-5-11-20-7-5-40-14-4z" fill="#fdfdfd" />
                <path d="M972 361h8M985 361h6M990 375h14M884 386h6M905 397h24" stroke="#555" strokeWidth="1.500" strokeDasharray="3 2" />
                <path d="M884 299v8" stroke="#444" strokeWidth="1.500" />
              </Scribble>
            </RightCol>
          </TopSection>

          <GridRow>
            <TableArea>
              <GridTable />
              <RedBox $x={88} $y={190} $w={604} $h={25} />
            </TableArea>
            <Scroll>
              <ScrollArrow />
              <ScrollTrack><ScrollThumb /></ScrollTrack>
              <ScrollArrow $down />
            </Scroll>
            <SideBtns>
              <IconBtn $w={29} $h={30}><UpDownIcon /></IconBtn>
              <IconBtn $w={29} $h={30} $mt={52}><ArrowIcon /></IconBtn>
              <IconBtn $w={29} $h={30} $mt={8}><ArrowIcon down /></IconBtn>
              <IconBtn $w={29} $h={32} $mt={18}><CopyGearIcon /></IconBtn>
              <IconBtn $w={29} $h={31} $mt={4}><RefreshIcon /></IconBtn>
            </SideBtns>
          </GridRow>

          <BottomRow>
            <ActionWrap>
              <SideTabs>
                <SideTab $active $h={89}><span>Azioni</span></SideTab>
                <SideTab $h={92}><span>Altro</span></SideTab>
              </SideTabs>
              <ActionGrid>
                {ACTIONS.map(([label, Icon, col]) => (
                  <ActionBtn key={label} $col={col}>
                    <ActionIcon><Icon /></ActionIcon>
                    <ActionLabel>{label}</ActionLabel>
                  </ActionBtn>
                ))}
              </ActionGrid>
            </ActionWrap>

            <Totals>
              <TotalRow>
                <Label $wide $w={196} $align="right" $pt={1}>Totale corpo :</Label>
                <Field $ml={3} $w={122} $h={24} $right>145,11</Field>
                <Field $gray $ml={3} $w={57} $h={24}>€</Field>
                <IconBtn $w={27} $h={29} $ml={5}><FolderIcon /></IconBtn>
              </TotalRow>
              <TotalRow $mt={-2}>
                <Label $wide $w={196} $align="right" $pt={1}>Spese di trasporto :</Label>
                <Field $ml={3} $w={122} $h={24} $right>0,00</Field>
                <Field $gray $ml={3} $w={57} $h={24}>€</Field>
              </TotalRow>
              <TotalRow $mt={3}>
                <Label $wide $w={196} $align="right" $pt={1}>Spese di incasso :</Label>
                <Field $ml={3} $w={122} $h={24} $right>0,00</Field>
                <Field $gray $ml={3} $w={57} $h={24}>€</Field>
              </TotalRow>
              <TotalRow $mt={3}>
                <Label $wide $w={196} $align="right" $pt={2}>Totale imposte :</Label>
                <Field $ml={3} $w={122} $h={24} $right>31,92</Field>
                <Field $gray $ml={3} $w={125} $h={24}>IVA Standard</Field>
                <IconBtn $w={27} $h={28} $ml={5}><FolderIcon /></IconBtn>
              </TotalRow>
              <TotalRow>
                <Label $wide $w={196} $align="right" $pt={1}>Totale documento :</Label>
                <Field $ml={3} $w={122} $h={24} $right $bold>177,03</Field>
                <Field $gray $ml={3} $w={57} $h={24}>€</Field>
                <IconBtn $w={24} $h={24} $ml={5}><ZoomPlusIcon /></IconBtn>
              </TotalRow>
              <TotalRow $mt={14}>
                <Label $wide $w={193} $align="right" $pt={2}>Peso lordo :</Label>
                <Field $ml={5} $w={93} $h={28} $right>0</Field>
                <Label $wide $ml={9} $w={61} $pt={2}>Volume :</Label>
                <Field $w={90} $h={28} $right>0</Field>
              </TotalRow>
              <RedBox $x={241} $y={-4} $w={114} $h={40} $b={5} />
              <RedBox $x={253} $y={80} $w={89} $h={61} $b={5} />
            </Totals>
          </BottomRow>
        </Panel>

        <StatusBar>
          <StatusCell $w={363}>TEO SAS DI CALTRAN LUCA</StatusCell>
          <StatusCell $w={361}>Ready Pro V21.1.11</StatusCell>
          <StatusCell $w={365}>Intestatario licenza : TEO SAS DI CALTRAN LUCA</StatusCell>
          <StatusCell $w={79}>12/03/2019</StatusCell>
          <StatusCell $w={78}>09:20</StatusCell>
        </StatusBar>
      </Body>

      <Taskbar>
        <TaskSlot $w={60} $ml={-1}><WinOrb /></TaskSlot>
        <TaskSlot $w={61}><IeIcon /></TaskSlot>
        <TaskSlot $w={61}><FoxIcon /></TaskSlot>
        <TaskSlot $w={63}><ExplorerIcon /></TaskSlot>
        <TaskSlot $w={61}><MediaIcon /></TaskSlot>
        <TaskSlot $w={63}><PrintTaskIcon /></TaskSlot>
        <TaskSlot $w={60} $active><ChromeIcon /></TaskSlot>
        <TaskSlot $w={60} $ml={2} $active><Strawberry /></TaskSlot>
        <Tray>
          <TrayText $mr={16}>IT</TrayText>
          <TrayText $size={8} $mr={10}>▲</TrayText>
          <TrayIcon $mr={15}><FlagIcon /></TrayIcon>
          <TrayIcon $mr={6}><NetIcon /></TrayIcon>
          <TrayIcon $mr={8}><SpeakerIcon /></TrayIcon>
          <Clock>09:20<br />12/03/2019</Clock>
          <ShowDesktop />
        </Tray>
      </Taskbar>
    </Screen>
  );
}
